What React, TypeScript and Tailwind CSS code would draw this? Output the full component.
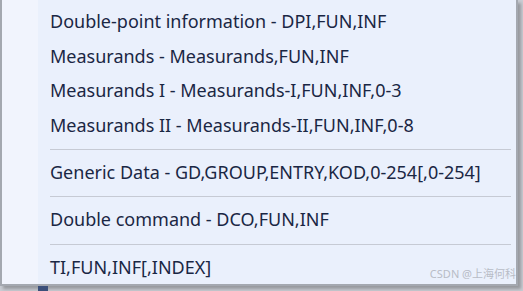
const items: (string | null)[] = [
  "Double-point information - DPI,FUN,INF",
  "Measurands - Measurands,FUN,INF",
  "Measurands I - Measurands-I,FUN,INF,0-3",
  "Measurands II - Measurands-II,FUN,INF,0-8",
  null,
  "Generic Data - GD,GROUP,ENTRY,KOD,0-254[,0-254]",
  null,
  "Double command - DCO,FUN,INF",
  null,
  "TI,FUN,INF[,INDEX]",
];

export default function App() {
  return (
    <div className="relative w-[523px] h-[291px] overflow-hidden bg-[#c9ccd3]">
      <div className="absolute left-[38px] top-[286px] w-[10px] h-[5px] bg-[#3b4f7a]" />
      <div className="flex w-[518px] h-[286px] border-l-2 border-r-2 border-b-2 border-[#a4a8b0] bg-[#eaf0fc] shadow-[3px_3px_3px_rgba(0,0,0,0.25)]">
        <div className="w-[36px] shrink-0 bg-[#f1f4fd]" />
        <div className="flex-1 flex flex-col pt-[4px] pl-[12px] pr-[5px] font-['Noto_Sans',sans-serif] text-[18px] leading-none text-[#1a2744]">
          {items.map((it, i) =>
            it === null ? (
              <div key={i} className="h-[13px] pt-[7px]">
                <div className="w-full h-px bg-[#c6cad4]" />
              </div>
            ) : (
              <div key={i} className="h-[35px] flex items-center whitespace-nowrap">
                {it}
              </div>
            )
          )}
        </div>
      </div>
      <div className="absolute right-[7px] bottom-[12px] text-[11px] leading-none text-[#b8bcc6] font-['Noto_Sans','Noto_Sans_CJK_SC',sans-serif]">
        CSDN @上海何科
      </div>
    </div>
  );
}
